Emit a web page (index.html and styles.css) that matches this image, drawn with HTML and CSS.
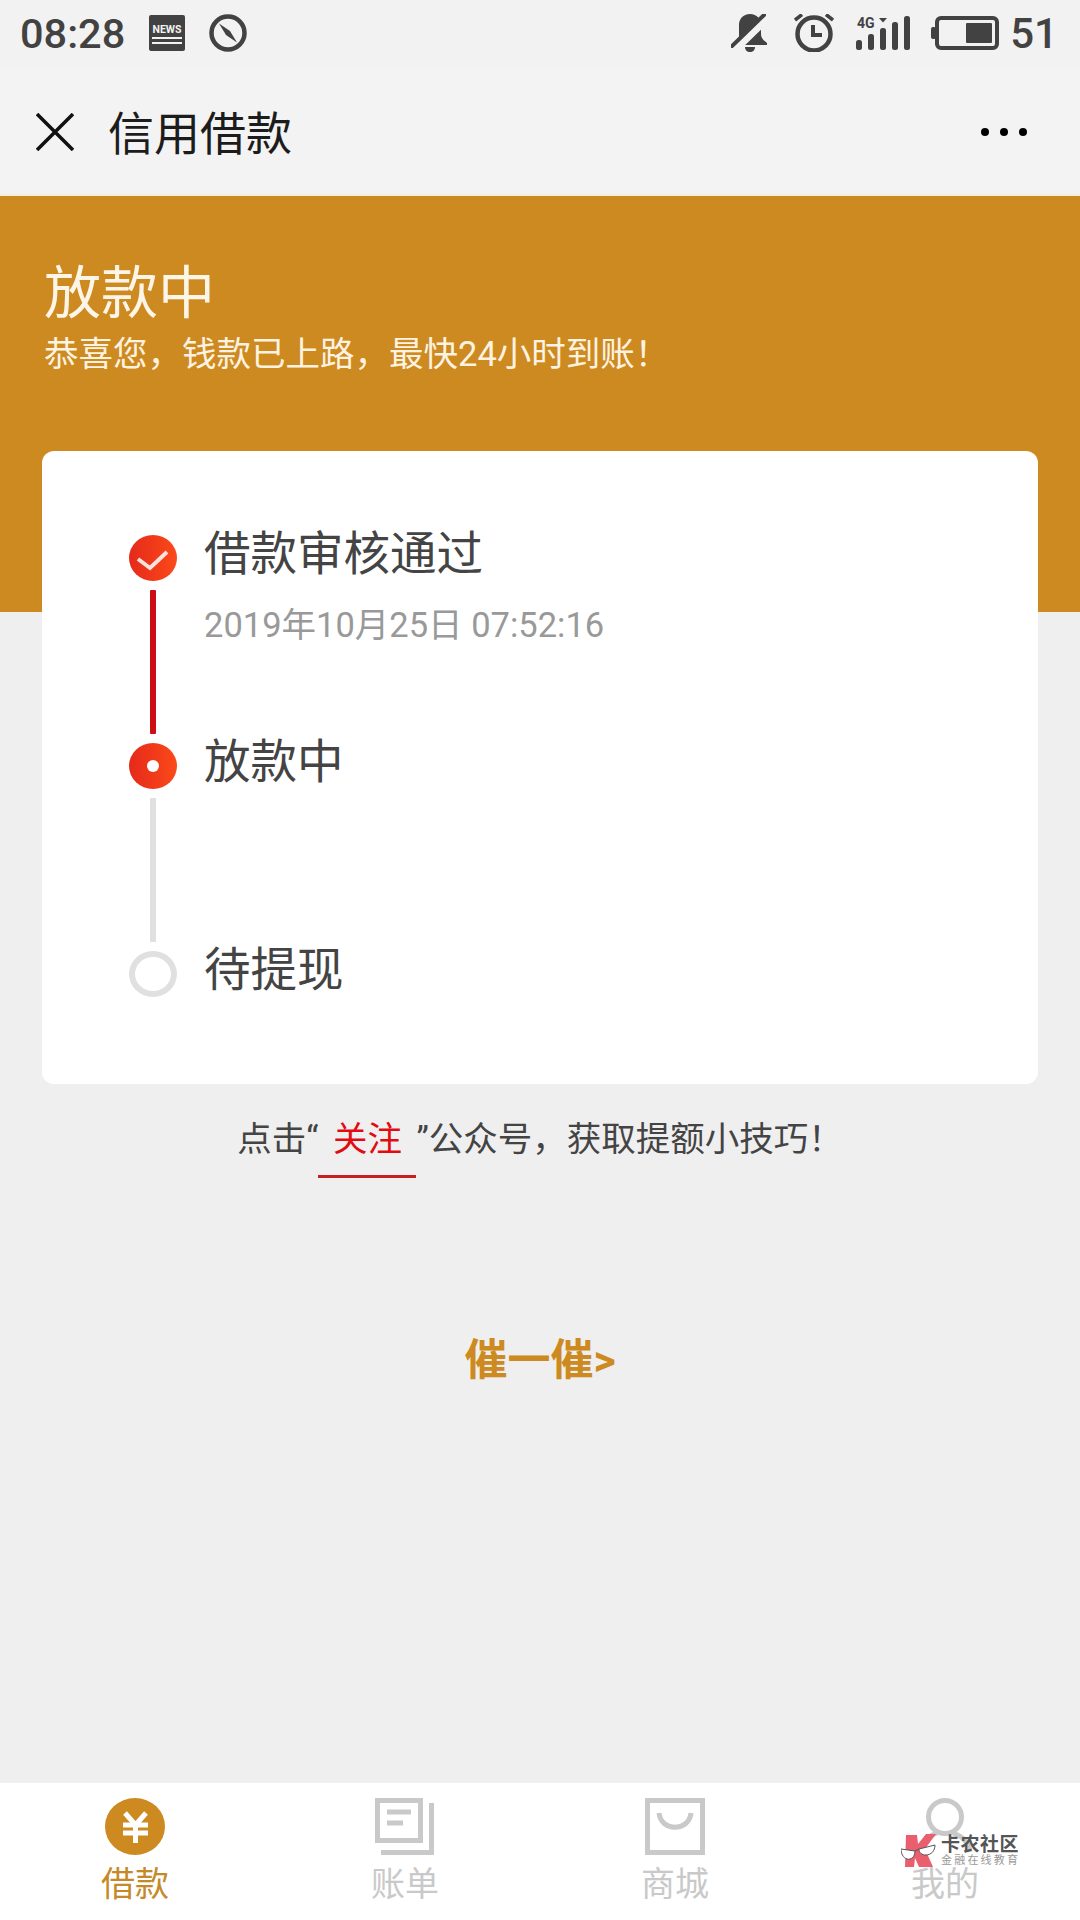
FILE: index.html
```html
<!DOCTYPE html>
<html lang="zh">
<head>
<meta charset="utf-8">
<title>信用借款</title>
<link rel="stylesheet" href="styles.css">
</head>
<body>
<div class="page">
  <div class="statusbar">
    <div class="status-left">
      <span class="time">08:28</span>
      <svg class="ic-news" viewBox="0 0 36 36"><rect width="36" height="36" rx="2" fill="#424242"/><text x="18" y="18" class="news-text" text-anchor="middle">NEWS</text><rect x="3" y="22" width="30" height="2" fill="#f2f2f2"/><rect x="3" y="27" width="30" height="2" fill="#f2f2f2"/></svg>
      <svg class="ic-compass" viewBox="0 0 38 38"><circle cx="19" cy="19" r="16.5" fill="none" stroke="#424242" stroke-width="4.5"/><path d="M10 9.5 L21 17 L28 28.5 L17 21 Z" fill="#424242"/></svg>
    </div>
    <div class="status-right">
      <svg class="ic-bell" viewBox="0 0 38 38"><path d="M19 0c7 0 11 5 11 11v9c0 4 2 6 6 9v2H5v-3l3-5V11C8 5 12 0 19 0z" fill="#424242"/><path d="M14 33h10c0 3-2 5-5 5s-5-2-5-5z" fill="#424242"/><path d="M0 40 L36 5" stroke="#f2f2f2" stroke-width="7"/><path d="M1 32 L33 1" stroke="#424242" stroke-width="4" stroke-linecap="round"/></svg>
      <svg class="ic-alarm" viewBox="0 0 40 38"><circle cx="20" cy="20" r="16.5" fill="none" stroke="#424242" stroke-width="4.5"/><path d="M19 11v10h9" fill="none" stroke="#424242" stroke-width="4"/><path d="M1 6 L8 0.5 M39 6 L32 0.5" stroke="#424242" stroke-width="3.5"/></svg>
      <svg class="ic-signal" viewBox="0 0 55 34"><text x="1" y="12" class="sig-text">4G</text><path d="M23 2h8l-4 4.500z" fill="#424242"/><rect y="24" width="6" height="10" rx="2.5" fill="#424242"/><rect x="12" y="18" width="6" height="16" rx="2.5" fill="#424242"/><rect x="24" y="12" width="6" height="22" rx="2.5" fill="#424242"/><rect x="36" y="6" width="6" height="28" rx="2.5" fill="#424242"/><rect x="48" y="0" width="6" height="34" rx="2.5" fill="#424242"/></svg>
      <svg class="ic-battery" viewBox="0 0 68 34"><rect x="0" y="11" width="5" height="12" rx="2" fill="#424242"/><rect x="6" y="2" width="60" height="30" rx="4" fill="none" stroke="#424242" stroke-width="4"/><rect x="35" y="7" width="26" height="20" rx="1" fill="#424242"/></svg>
      <span class="battery-num">51</span>
    </div>
  </div>

  <header class="navbar">
    <svg class="ic-close" viewBox="0 0 38 38"><path d="M1 1 L37 37 M37 1 L1 37" stroke="#111" stroke-width="3.5" fill="none"/></svg>
    <h1 class="nav-title">信用借款</h1>
    <div class="dots"><i></i><i></i><i></i></div>
  </header>

  <section class="hero">
    <h2 class="hero-title">放款中</h2>
    <p class="hero-sub">恭喜您，钱款已上路，最快24小时到账！</p>
  </section>

  <main class="content">
    <div class="card">
      <div class="step">
        <div class="rail">
          <span class="dot dot-done"><svg viewBox="0 0 48 46"><path d="M9 24 L21 33 L38 17" fill="none" stroke="#fbe3dc" stroke-width="4"/></svg></span>
          <span class="line line-red"></span>
        </div>
        <div class="step-body">
          <div class="step-title">借款审核通过</div>
          <div class="step-date">2019年10月25日 07:52:16</div>
        </div>
      </div>
      <div class="step">
        <div class="rail">
          <span class="dot dot-active"><i></i></span>
          <span class="line line-grey"></span>
        </div>
        <div class="step-body"><div class="step-title">放款中</div></div>
      </div>
      <div class="step step-last">
        <div class="rail"><span class="dot dot-wait"></span></div>
        <div class="step-body"><div class="step-title">待提现</div></div>
      </div>
    </div>

    <p class="tip">点击“<a class="follow">关注</a>”公众号，获取提额小技巧！</p>
    <div class="urge">催一催&gt;</div>
  </main>

  <nav class="tabbar">
    <div class="tab tab-on">
      <svg class="tab-icon" viewBox="0 0 60 60"><ellipse cx="30" cy="28.5" rx="30" ry="28.5" fill="#cd8a20"/><path d="M20 15 L30.500 27 L41 15 M18 27 H43 M18 35 H43 M30.500 27 V45" fill="none" stroke="#fff" stroke-width="5"/></svg>
      <span>借款</span>
    </div>
    <div class="tab">
      <svg class="tab-icon" viewBox="0 0 60 60"><path d="M2.500 2.500H45.500V42.500H2.500Z M12 14H36 M12 25H28 M56.500 5V54.500H6" fill="none" stroke="#c9c9c9" stroke-width="5"/></svg>
      <span>账单</span>
    </div>
    <div class="tab">
      <svg class="tab-icon" viewBox="0 0 60 60"><path d="M2.500 2.500H57.500V54.500H2.500Z" fill="none" stroke="#c9c9c9" stroke-width="5"/><path d="M14 15C16 34 44 34 46 15" fill="none" stroke="#c9c9c9" stroke-width="5"/></svg>
      <span>商城</span>
    </div>
    <div class="tab">
      <svg class="tab-icon" viewBox="0 0 60 60"><circle cx="30" cy="19" r="16.5" fill="none" stroke="#c9c9c9" stroke-width="5"/><path d="M5 54C7 42 14 38 22 35M55 54C53 42 46 38 38 35" fill="none" stroke="#c9c9c9" stroke-width="5"/></svg>
      <span>我的</span>
    </div>
  </nav>

  <div class="watermark">
    <svg class="wm-logo" viewBox="0 0 36 34"><path d="M5 1H16L17 10L25 0H35L24 15L32 33H18L14 24L13 33H4Z" fill="#ea5f6e"/><path d="M0 15L14 17C14 23 10 26 6 25C2 24 0 19 0 15Z M18 15L34 11C34 17 30 21 25 21C21 21 18 19 18 15Z M14 17L18 15" fill="#fff" stroke="#555" stroke-width="1"/></svg>
    <div class="wm-text">
      <span class="wm-main">卡农社区</span>
      <span class="wm-sub">金融在线教育</span>
    </div>
  </div>
</div>
</body>
</html>
```

FILE: styles.css
```css
* { box-sizing: border-box; margin: 0; padding: 0; }
html, body { width: 1080px; height: 1920px; overflow: hidden; }
body { font-family: Roboto, "Noto Sans CJK SC", sans-serif; background: #efefef; }
.page { position: relative; width: 1080px; height: 1920px; display: flex; flex-direction: column; }

.statusbar { height: 66px; background: #f2f2f2; display: flex; justify-content: space-between; align-items: center; padding: 0 22px 0 20px; color: #424242; }
.status-left, .status-right { display: flex; align-items: center; }
.time { font-weight: 500; font-size: 41.5px; width: 129px; }
.ic-news { width: 36px; height: 36px; }
.news-text { font-weight: 700; font-size: 10.5px; fill: #f2f2f2; }
.ic-compass { width: 38px; height: 38px; margin-left: 24px; }
.ic-bell { width: 38px; height: 38px; }
.ic-alarm { width: 40px; height: 38px; margin-left: 25px; }
.ic-signal { width: 55px; height: 34px; margin-left: 22px; }
.sig-text { font-weight: 700; font-size: 14px; fill: #424242; }
.ic-battery { width: 68px; height: 34px; margin-left: 20px; }
.battery-num { font-weight: 500; font-size: 42px; margin-left: 11px; }

.navbar { height: 130px; background: #f3f3f3; display: flex; align-items: center; padding: 0 53px 0 36px; border-bottom: 2px solid #f7efd6; }
.ic-close { width: 38px; height: 38px; margin-top: 3px; }
.nav-title { font-size: 46px; font-weight: 400; color: #1c1c1c; margin-left: 34px; flex: 1; }
.dots { display: flex; gap: 11px; margin-top: 4px; }
.dots i { width: 8px; height: 8px; border-radius: 50%; background: #000; }

.hero { height: 416px; background: #cd8a20; color: #fdf3e0; padding: 66px 44px 0; }
.hero-title { font-size: 57px; font-weight: 400; line-height: 64px; color: #fdf6e8; }
.hero-sub { font-size: 34.5px; line-height: 46px; margin-top: 5px; }

.content { flex: 1; display: flex; flex-direction: column; align-items: center; margin-top: -161px; }
.card { width: 996px; height: 633px; background: #fff; border-radius: 12px; padding: 84px 87px 0; }
.step { display: flex; height: 208px; }
.step-last { height: 50px; }
.rail { width: 48px; display: flex; flex-direction: column; align-items: center; margin-right: 27px; flex: none; }
.dot { width: 48px; height: 46px; border-radius: 50%; display: flex; align-items: center; justify-content: center; flex: none; }
.dot svg { width: 48px; height: 46px; }
.dot-done, .dot-active { background: linear-gradient(90deg, #e5291a, #fb4a1a); }
.dot-active i { width: 12px; height: 12px; border-radius: 50%; background: #fff; }
.dot-wait { border: 6px solid #e0e0e0; background: #fff; }
.line { width: 6px; height: 144px; margin-top: 9px; border-radius: 1px; }
.line-red { background: #cb0f14; }
.line-grey { background: #e0e0e0; }
.step-body { margin-top: -13px; }
.step-title { font-size: 46.5px; line-height: 64px; color: #444; }
.step-date { font-size: 34.5px; line-height: 46px; color: #999; margin-top: 16px; }

.tip { margin-top: 30px; font-size: 34.5px; line-height: 50px; color: #444; text-align: center; height: 140px; }
.follow { display: inline-block; width: 98px; color: #e00c12; text-align: center; border-bottom: 3px solid #c4201f; height: 64px; }
.urge { font-size: 43px; font-weight: 700; line-height: 62px; color: #cd8a20; margin-top: 75px; }

.tabbar { height: 137px; background: #fff; display: grid; grid-template-columns: repeat(4, 1fr); padding-top: 15px; }
.tab { display: flex; flex-direction: column; align-items: center; color: #c9c9c9; font-size: 34px; line-height: 34px; }
.tab-icon { width: 60px; height: 60px; margin-bottom: 9px; }
.tab-on { color: #c48a2a; }

.watermark { position: absolute; left: 901px; top: 1834px; display: flex; gap: 4px; }
.wm-logo { width: 36px; height: 34px; }
.wm-text { display: flex; flex-direction: column; }
.wm-main { font-size: 19px; font-weight: 700; line-height: 21px; color: #555; letter-spacing: 0.5px; }
.wm-sub { font-size: 11px; line-height: 11px; color: #999; letter-spacing: 2.2px; }
```
